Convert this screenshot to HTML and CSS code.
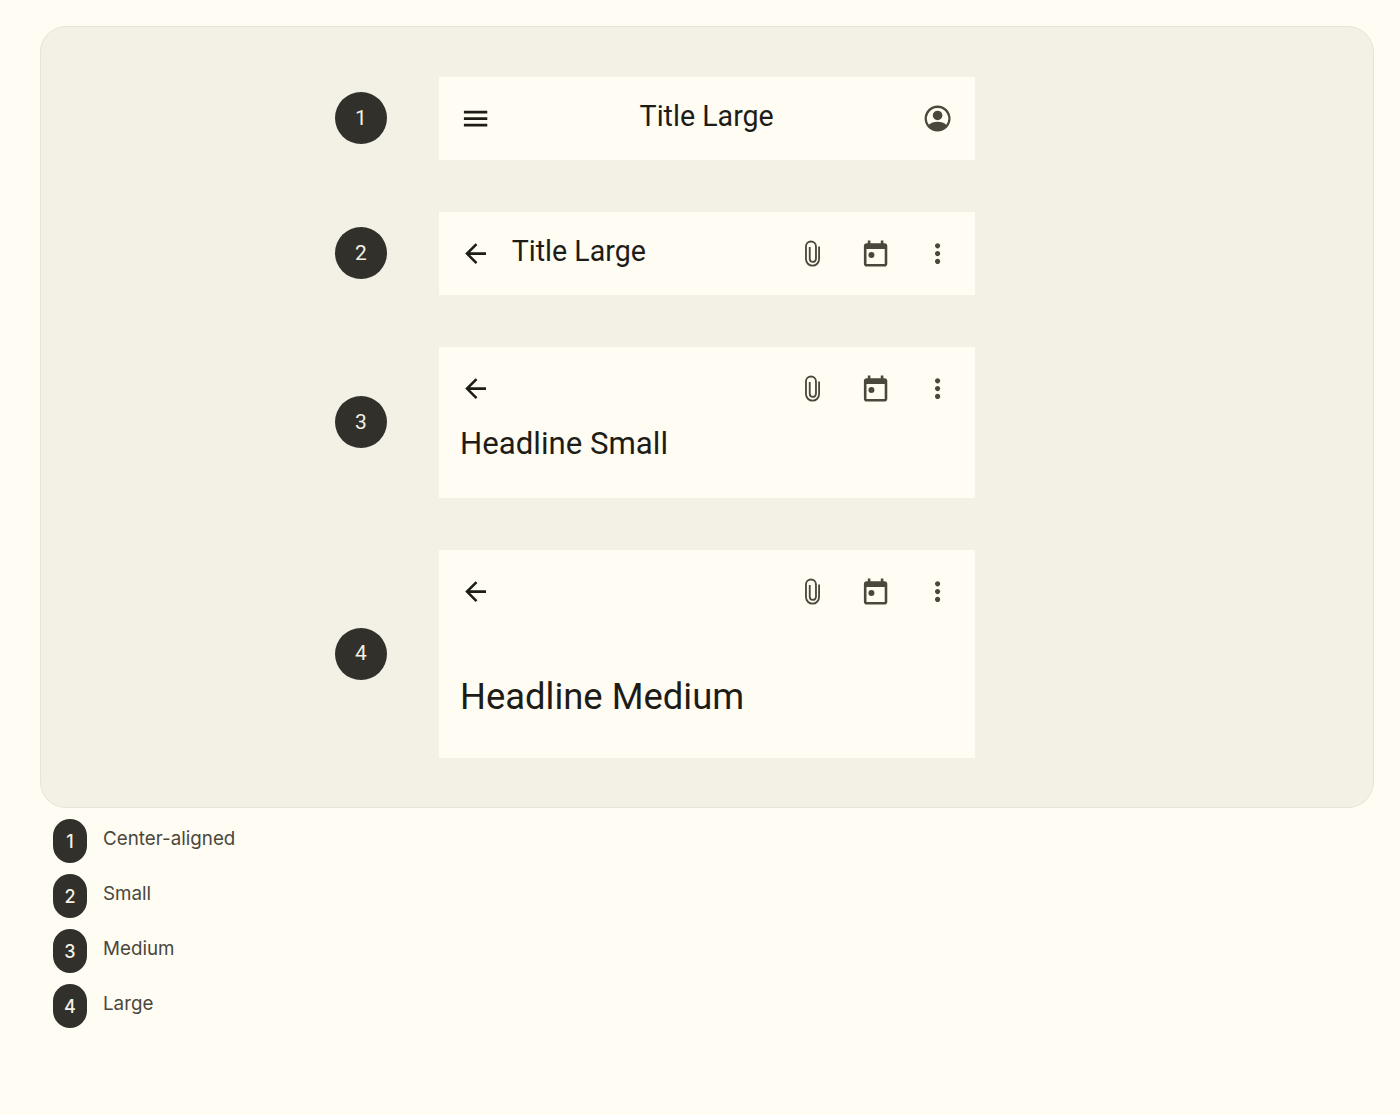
FILE: index.html
```html
<!DOCTYPE html>
<html lang="en">
<head>
    <meta charset="UTF-8">
    <title>Top app bar</title>
    <link rel="stylesheet" href="styles.css">
</head>
<body>

<svg class="sprite" aria-hidden="true">
    <symbol id="icon-menu" viewBox="0 0 24 24"><path d="M3 18h18v-2H3v2zm0-5h18v-2H3v2zm0-7v2h18V6H3z"/></symbol>
    <symbol id="icon-back" viewBox="0 0 24 24"><path d="M20 11H7.83l5.59-5.59L12 4l-8 8 8 8 1.41-1.41L7.83 13H20v-2z"/></symbol>
    <symbol id="icon-account" viewBox="0 0 24 24"><path fill-rule="evenodd" d="M12 2C6.48 2 2 6.48 2 12s4.48 10 10 10 10-4.48 10-10S17.52 2 12 2zm0 1.8a8.2 8.2 0 0 1 6.7 12.93C17.2 15.3 14.8 14.5 12 14.5s-5.2.8-6.7 2.23A8.2 8.2 0 0 1 12 3.8z"/><circle cx="12" cy="9.6" r="3.7"/></symbol>
    <symbol id="icon-attach" viewBox="0 0 24 24"><path fill="none" stroke="currentColor" stroke-width="1.4" d="M9.8 7V16a2.4 2.4 0 0 0 4.8 0V6.55a3.85 3.85 0 0 0-7.7 0V16.25a5.05 5.05 0 0 0 10.1 0V6.5"/></symbol>
    <symbol id="icon-event" viewBox="0 0 24 24"><path fill-rule="evenodd" d="M19 4h-1V2h-2v2H8V2H6v2H5c-1.11 0-2 .9-2 2v14c0 1.1.89 2 2 2h14c1.1 0 2-.9 2-2V6c0-1.1-.9-2-2-2zm0 16H5V8.5h14V20z"/><circle cx="8.8" cy="13" r="2.3"/></symbol>
    <symbol id="icon-more" viewBox="0 0 24 24"><path d="M12 8c1.1 0 2-.9 2-2s-.9-2-2-2-2 .9-2 2 .9 2 2 2zm0 2c-1.1 0-2 .9-2 2s.9 2 2 2 2-.9 2-2-.9-2-2-2zm0 6c-1.1 0-2 .9-2 2s.9 2 2 2 2-.9 2-2-.9-2-2-2z"/></symbol>
</svg>

<main class="panel">
    <div class="row">
        <span class="badge">1</span>
        <div class="bar">
            <div class="toolbar">
                <span class="icon-btn nav"><svg><use href="#icon-menu"/></svg></span>
                <span class="title title-center">Title Large</span>
                <span class="icon-btn"><svg><use href="#icon-account"/></svg></span>
            </div>
        </div>
    </div>

    <div class="row">
        <span class="badge">2</span>
        <div class="bar">
            <div class="toolbar">
                <span class="icon-btn nav"><svg><use href="#icon-back"/></svg></span>
                <span class="title title-small">Title Large</span>
                <span class="icon-btn"><svg><use href="#icon-attach"/></svg></span>
                <span class="icon-btn"><svg><use href="#icon-event"/></svg></span>
                <span class="icon-btn"><svg><use href="#icon-more"/></svg></span>
            </div>
        </div>
    </div>

    <div class="row">
        <span class="badge">3</span>
        <div class="bar">
            <div class="toolbar">
                <span class="icon-btn nav"><svg><use href="#icon-back"/></svg></span>
                <span class="spacer"></span>
                <span class="icon-btn"><svg><use href="#icon-attach"/></svg></span>
                <span class="icon-btn"><svg><use href="#icon-event"/></svg></span>
                <span class="icon-btn"><svg><use href="#icon-more"/></svg></span>
            </div>
            <div class="headline headline-small">Headline Small</div>
        </div>
    </div>

    <div class="row">
        <span class="badge">4</span>
        <div class="bar">
            <div class="toolbar">
                <span class="icon-btn nav"><svg><use href="#icon-back"/></svg></span>
                <span class="spacer"></span>
                <span class="icon-btn"><svg><use href="#icon-attach"/></svg></span>
                <span class="icon-btn"><svg><use href="#icon-event"/></svg></span>
                <span class="icon-btn"><svg><use href="#icon-more"/></svg></span>
            </div>
            <div class="headline headline-medium">Headline Medium</div>
        </div>
    </div>
</main>

<ol class="legend">
    <li><span class="legend-num">1</span><span class="legend-text">Center-aligned</span></li>
    <li><span class="legend-num">2</span><span class="legend-text">Small</span></li>
    <li><span class="legend-num">3</span><span class="legend-text">Medium</span></li>
    <li><span class="legend-num">4</span><span class="legend-text">Large</span></li>
</ol>

</body>
</html>
```

FILE: styles.css
```css
body {
    margin: 0;
    padding: 26px 26px 0 40px;
    background-color: #fffcf4;
    color: #1e1c16;
    font-family: Roboto, "Liberation Sans", sans-serif;
}

.sprite {
    display: none;
}

.panel {
    display: flex;
    flex-direction: column;
    gap: 52px;
    height: 782px;
    box-sizing: border-box;
    padding-top: 50px;
    background-color: #f3f0e5;
    border: 1px solid #e6e4d6;
    border-radius: 26px;
}

.row {
    display: grid;
    grid-template-columns: 1fr 536px 1fr;
    column-gap: 52px;
    align-items: center;
}

.badge {
    justify-self: end;
    display: flex;
    align-items: center;
    justify-content: center;
    width: 52px;
    height: 52px;
    margin-bottom: 1px;
    padding-bottom: 1px;
    box-sizing: border-box;
    border-radius: 50%;
    background-color: #32302a;
    color: #f3f0e5;
    font-size: 21px;
    font-weight: 400;
}

.bar {
    background-color: #fffcf4;
}

.toolbar {
    display: flex;
    align-items: center;
    padding: 10px 5.6px 10px 5px;
}

.icon-btn {
    display: flex;
    align-items: center;
    justify-content: center;
    flex: none;
    width: 62.7px;
    height: 63px;
    color: #4a473c;
}

.icon-btn.nav {
    color: #1e1c16;
}

.icon-btn svg {
    width: 31.2px;
    height: 31.2px;
    fill: currentColor;
}

.title {
    flex: 1;
    font-size: 28.6px;
    line-height: 37px;
    margin-bottom: 4px;
}

.title-center {
    text-align: center;
}

.title-small {
    margin-left: 5px;
}

.spacer {
    flex: 1;
}

.headline {
    padding-left: 21px;
}

.headline-small {
    font-size: 31.2px;
    line-height: 42px;
    margin-top: -7px;
    padding-bottom: 33px;
}

.headline-medium {
    font-size: 36.4px;
    line-height: 44px;
    margin-top: 42px;
    padding-bottom: 39px;
}

.legend {
    display: flex;
    flex-direction: column;
    gap: 11px;
    list-style: none;
    margin: 11px 0 0 13px;
    padding: 0;
}

.legend li {
    display: flex;
    gap: 16px;
}

.legend-num {
    display: flex;
    align-items: center;
    justify-content: center;
    width: 34px;
    height: 44px;
    border-radius: 17px;
    background-color: #32302a;
    color: #f3f0e5;
    font-family: Inter, sans-serif;
    font-size: 18px;
    font-weight: 500;
}

.legend-text {
    margin-top: 6px;
    color: #4a473c;
    font-family: Inter, sans-serif;
    font-size: 18.8px;
    line-height: 28px;
}
```
